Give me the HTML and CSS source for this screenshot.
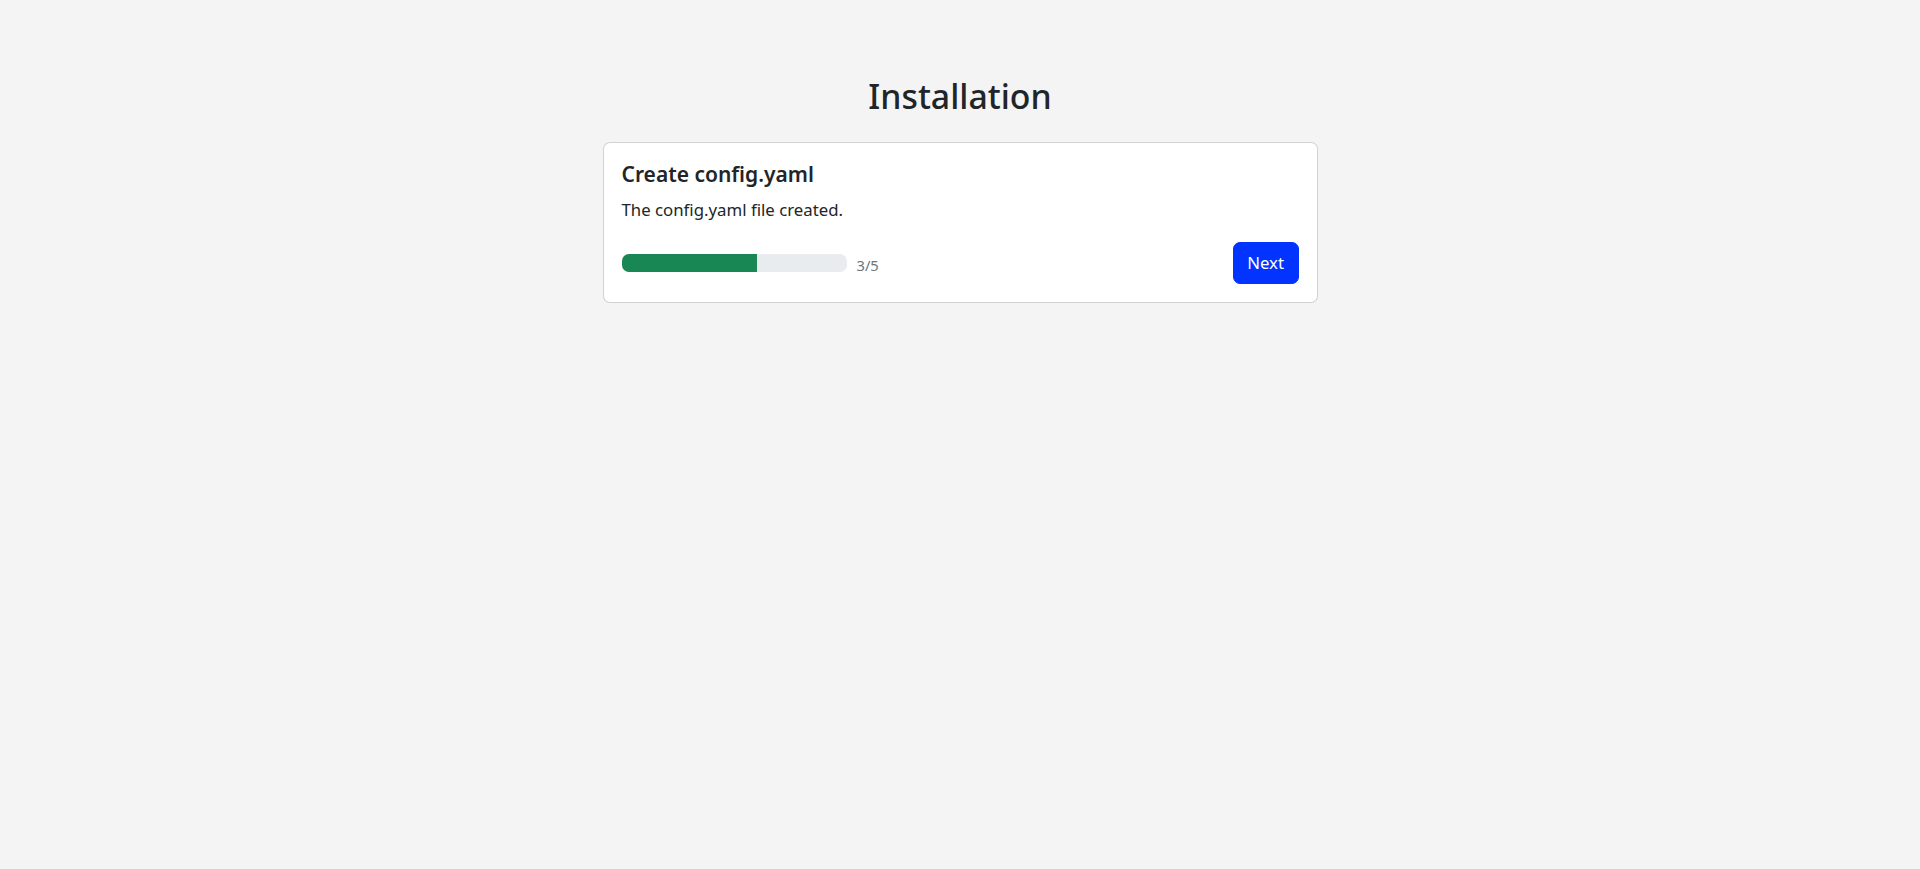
FILE: index.html
```html
<!DOCTYPE html>
<html lang="en">
<head>
    <meta charset="UTF-8">
    <meta name="viewport" content="width=device-width, initial-scale=1.0">
    <title>Installation</title>
    <link rel="stylesheet" href="styles.css">
</head>
<body>
    <div class="page">
        <h1 class="page-title">Installation</h1>
        <div class="card">
            <h2 class="step-title">Create config.yaml</h2>
            <p class="step-text">The config.yaml file created.</p>
            <div class="step-footer">
                <div class="step-progress">
                    <div class="progress">
                        <div class="progress-bar" style="width: 60%"></div>
                    </div>
                    <span class="progress-label">3/5</span>
                </div>
                <button class="btn-next">Next</button>
            </div>
        </div>
    </div>
</body>
</html>
```

FILE: styles.css
```css
/* Installer wizard layout */
body {
    font-family: "Noto Sans", "Open Sans", sans-serif;
    margin: 0;
    background-color: #f4f4f4;
    color: #212529;
}
.page {
    padding-top: 76px;
}
.page-title {
    margin: 0 0 26px;
    font-size: 33.8px;
    font-weight: 500;
    line-height: 40px;
    text-align: center;
}
.card {
    max-width: 715px;
    margin: 0 auto;
    padding: 18px;
    background: white;
    border: 1px solid rgba(0, 0, 0, 0.175);
    border-radius: 7px;
    box-sizing: border-box;
}
.step-title {
    margin: 0 0 10px;
    font-size: 21px;
    font-weight: 600;
    line-height: 26px;
}
.step-text {
    margin: 0 0 19px;
    font-size: 16.8px;
    line-height: 26px;
}
.step-footer {
    display: flex;
    align-items: center;
    justify-content: space-between;
}
.step-progress {
    display: flex;
    align-items: center;
}
.progress {
    width: 225px;
    height: 18px;
    background-color: #e9ecef;
    border-radius: 7px;
    overflow: hidden;
}
.progress-bar {
    height: 100%;
    background-color: #198754;
}
.progress-label {
    margin-left: 10px;
    padding-top: 3px;
    font-size: 14.7px;
    line-height: 22px;
    color: #6c757d;
}
.btn-next {
    padding: 7px 13.5px;
    font-family: inherit;
    font-size: 16.8px;
    line-height: 26px;
    color: white;
    background-color: #0334ff;
    border: 1px solid #0334ff;
    border-radius: 7px;
    cursor: pointer;
}
```
